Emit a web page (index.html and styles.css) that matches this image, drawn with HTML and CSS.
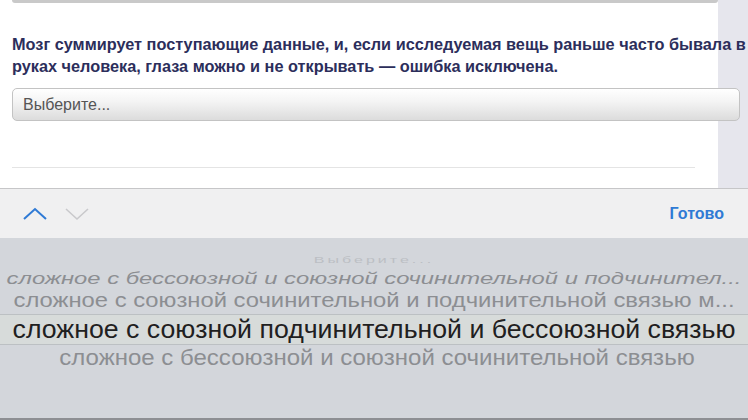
FILE: index.html
```html
<!DOCTYPE html>
<html lang="ru">
<head>
    <meta charset="UTF-8">
    <meta name="viewport" content="width=device-width, initial-scale=1.0">
    <title>Вопрос</title>
    <link rel="stylesheet" href="styles.css">
</head>
<body>
    <div class="page">
        <div class="prev-select"></div>
        <p class="question">Мозг суммирует поступающие данные, и, если исследуемая вещь раньше часто бывала в руках человека, глаза можно и не открывать — ошибка исключена.</p>
        <div class="select">Выберите...</div>
        <hr class="divider">
    </div>
    <div class="toolbar">
        <div class="arrows">
            <svg class="arrow up" width="26" height="16" viewBox="0 0 26 16">
                <polyline points="2,13 13,3 24,13" fill="none" stroke="#2f7ad5" stroke-width="2"/>
            </svg>
            <svg class="arrow down" width="26" height="16" viewBox="0 0 26 16">
                <polyline points="2,3 13,13 24,3" fill="none" stroke="#c9c9cc" stroke-width="1.6"/>
            </svg>
        </div>
        <button class="done">Готово</button>
    </div>
    <div class="picker">
        <div class="row row-far">Выберите...</div>
        <div class="row row-1">сложное с бессоюзной и союзной сочинительной и подчинител...</div>
        <div class="row row-2">сложное с союзной сочинительной и подчинительной связью м...</div>
        <div class="row row-selected">сложное с союзной подчинительной и бессоюзной связью</div>
        <div class="row row-4">сложное с бессоюзной и союзной сочинительной связью</div>
    </div>
</body>
</html>
```

FILE: styles.css
```css
body {
    margin: 0;
    font-family: 'Liberation Sans', Arial, sans-serif;
    background: #fff;
    overflow: hidden;
}

.page {
    height: 188px;
    padding: 0 0 0 12px;
    box-sizing: border-box;
    background: linear-gradient(to right, #fff 718px, #e6e6ed 718px);
    overflow: hidden;
}

.prev-select {
    width: 706px;
    height: 3px;
    background: #c9c9c9;
    border-radius: 0 0 4px 4px;
}

.question {
    margin: 30px 0 0;
    width: 736px;
    font-size: 16.3px;
    font-weight: bold;
    line-height: 22px;
    color: #2c2e5b;
}

.select {
    margin-top: 11px;
    width: 728px;
    height: 33px;
    box-sizing: border-box;
    padding-left: 10px;
    border: 1px solid #c3c3c3;
    border-radius: 5px;
    background: linear-gradient(#ffffff, #f4f4f4 40%, #dcdcdc);
    font-size: 16px;
    line-height: 31px;
    color: #555;
}

.divider {
    margin: 46px 0 0;
    width: 683px;
    border: 0;
    border-top: 1px solid #e4e4e4;
}

.toolbar {
    height: 50px;
    box-sizing: border-box;
    border-top: 1px solid #c6c6c8;
    background: #f0f0f1;
    display: flex;
    align-items: center;
    justify-content: space-between;
    padding: 0 24px 0 22px;
}

.arrows {
    display: flex;
    gap: 16px;
}

.arrow {
    display: block;
}

.done {
    border: 0;
    background: none;
    padding: 0;
    font-family: inherit;
    font-size: 16px;
    font-weight: bold;
    color: #2f7ad5;
}

.picker {
    height: 182px;
    box-sizing: border-box;
    padding-top: 12px;
    background: #d3d6db;
    border-bottom: 2px solid #8d8f93;
}

.row {
    display: flex;
    justify-content: center;
    align-items: center;
    white-space: nowrap;
    color: #8c8e92;
}

.row-far {
    height: 20px;
    font-size: 16px;
    letter-spacing: 3px;
    color: #bcbfc4;
    transform: scaleY(0.6);
}

.row-1 {
    height: 16px;
    font-size: 23.8px;
    font-style: italic;
    transform: scaleY(0.7);
}

.row-2 {
    height: 28px;
    font-size: 23.8px;
    transform: scaleY(0.88);
}

.row-selected {
    height: 29px;
    line-height: 27px;
    border-top: 1px solid #bcc0c3;
    border-bottom: 1px solid #bcc0c3;
    background: #d7dbda;
    font-size: 26.7px;
    color: #1f2021;
}

.row-4 {
    height: 26px;
    font-size: 24px;
    padding-left: 6px;
    transform: scaleY(0.9);
}
```
